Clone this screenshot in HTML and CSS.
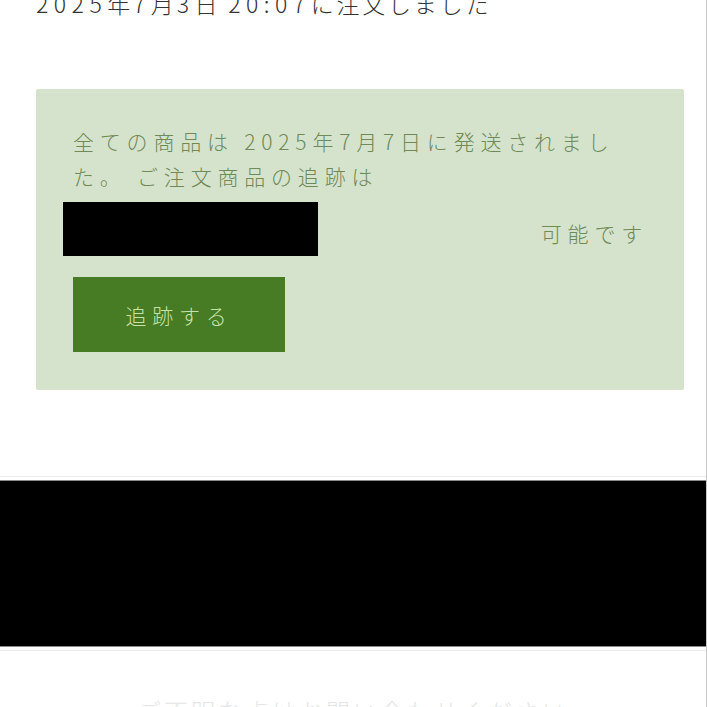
FILE: index.html
```html
<!DOCTYPE html>
<html lang="ja">
<head>
<meta charset="utf-8">
<title>注文詳細</title>
<link rel="stylesheet" href="styles.css">
</head>
<body>
<div class="page">
  <p class="ordered"><span class="num">2025</span>年<span class="num">7</span>月<span class="num">3</span>日 <span class="num">20:07</span>に注文しました</p>
  <section class="ship-box">
    <p class="ship-msg">全ての商品は 2025年7月7日に発送されました。 ご注文商品の追跡は</p>
    <div class="track-row">
      <span class="redacted"></span>
      <span class="possible">可能です</span>
    </div>
    <button class="track-btn" type="button">追跡する</button>
  </section>
  <div class="band-wrap">
    <div class="redacted-band"></div>
  </div>
  <p class="footer-note">ご不明な点はお問い合わせください</p>
</div>
</body>
</html>
```
FILE: styles.css
```css
html, body {
  margin: 0;
  padding: 0;
  background: #ffffff;
  height: 707px;
  overflow: hidden;
}
body {
  font-family: "Noto Sans CJK JP", "Noto Sans", sans-serif;
  font-weight: 300;
}
.page {
  width: 706px;
  height: 707px;
  border-right: 1px solid #c8c8c8;
  overflow: hidden;
}
.ordered {
  margin: -12px 22px 0 36px;
  font-size: 23px;
  line-height: 30px;
  letter-spacing: 2.8px;
  color: #333333;
  white-space: nowrap;
}
.ordered .num {
  letter-spacing: 5.5px;
}
.ship-box {
  margin: 71px 22px 0 36px;
  background: #d6e3cc;
  border-radius: 2px;
  padding: 35px 36px 38px 37px;
  color: #6f8a57;
}
.ship-msg {
  margin: 0 12px 0 0;
  font-size: 21px;
  line-height: 35px;
  letter-spacing: 5.8px;
}
.track-row {
  margin-top: 8px;
  height: 54px;
  display: flex;
  align-items: center;
  justify-content: space-between;
}
.redacted {
  display: block;
  width: 255px;
  height: 54px;
  margin-left: -10px;
  background: #000000;
}
.possible {
  font-size: 21px;
  letter-spacing: 5.8px;
  padding-top: 8px;
}
.track-btn {
  display: block;
  margin-top: 21px;
  width: 212px;
  height: 75px;
  border: none;
  border-radius: 0;
  background: #477b24;
  color: #c6e2a9;
  font-family: inherit;
  font-weight: 300;
  font-size: 21px;
  letter-spacing: 5.8px;
  padding: 0;
}
.band-wrap {
  margin-top: 86px;
  border-top: 1px solid #ececec;
  border-bottom: 1px solid #ececec;
  padding: 3px 0;
}
.redacted-band {
  height: 165px;
  background: #000000;
  border-top: 1px solid #8a8a8a;
  border-bottom: 1px solid #8a8a8a;
}
.footer-note {
  margin: 40px 0 0 0;
  text-align: center;
  font-size: 24px;
  line-height: 40px;
  letter-spacing: 3px;
  color: #e6e6e6;
  white-space: nowrap;
}
```
